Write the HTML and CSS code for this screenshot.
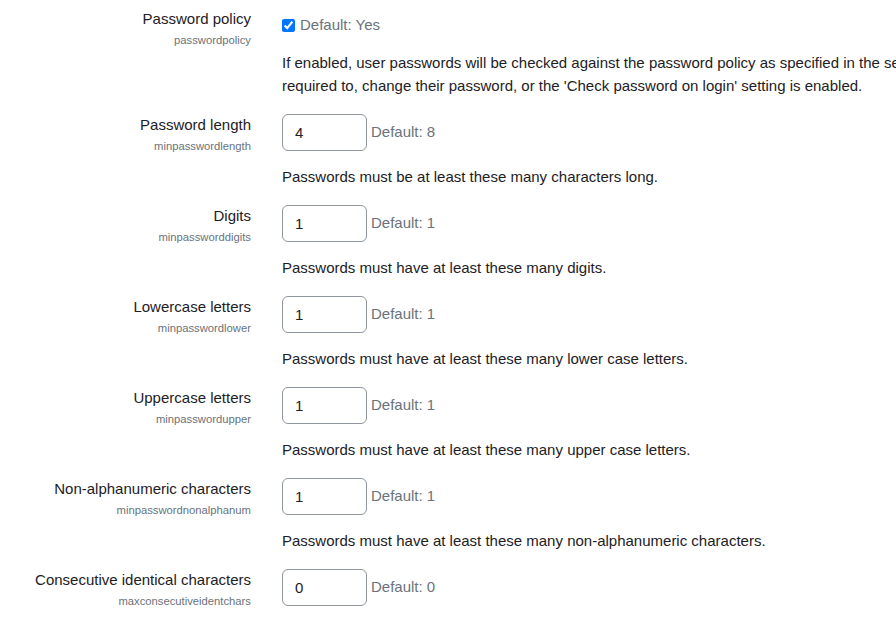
FILE: index.html
```html
<!DOCTYPE html>
<html>
<head>
<meta charset="utf-8">
<link rel="stylesheet" href="styles.css">
</head>
<body>
<div class="settings">
  <div class="form-item">
    <div class="form-label">
      <label>Password policy</label>
      <span class="shortname">passwordpolicy</span>
    </div>
    <div class="form-setting">
      <div class="check-line">
        <input type="checkbox" checked class="check">
        <span class="defaultinfo">Default: Yes</span>
      </div>
      <div class="description">
        <span class="line">If enabled, user passwords will be checked against the password policy as specified in the settings below. Enabling the password policy will not affect existing users until they decide to, or are</span>
        <span class="line">required to, change their password, or the 'Check password on login' setting is enabled.</span>
      </div>
    </div>
  </div>

  <div class="form-item">
    <div class="form-label">
      <label>Password length</label>
      <span class="shortname">minpasswordlength</span>
    </div>
    <div class="form-setting">
      <div class="input-line">
        <input type="text" class="form-control" value="4">
        <span class="defaultinfo">Default: 8</span>
      </div>
      <div class="description"><span class="line">Passwords must be at least these many characters long.</span></div>
    </div>
  </div>

  <div class="form-item">
    <div class="form-label">
      <label>Digits</label>
      <span class="shortname">minpassworddigits</span>
    </div>
    <div class="form-setting">
      <div class="input-line">
        <input type="text" class="form-control" value="1">
        <span class="defaultinfo">Default: 1</span>
      </div>
      <div class="description"><span class="line">Passwords must have at least these many digits.</span></div>
    </div>
  </div>

  <div class="form-item">
    <div class="form-label">
      <label>Lowercase letters</label>
      <span class="shortname">minpasswordlower</span>
    </div>
    <div class="form-setting">
      <div class="input-line">
        <input type="text" class="form-control" value="1">
        <span class="defaultinfo">Default: 1</span>
      </div>
      <div class="description"><span class="line">Passwords must have at least these many lower case letters.</span></div>
    </div>
  </div>

  <div class="form-item">
    <div class="form-label">
      <label>Uppercase letters</label>
      <span class="shortname">minpasswordupper</span>
    </div>
    <div class="form-setting">
      <div class="input-line">
        <input type="text" class="form-control" value="1">
        <span class="defaultinfo">Default: 1</span>
      </div>
      <div class="description"><span class="line">Passwords must have at least these many upper case letters.</span></div>
    </div>
  </div>

  <div class="form-item">
    <div class="form-label">
      <label>Non-alphanumeric characters</label>
      <span class="shortname">minpasswordnonalphanum</span>
    </div>
    <div class="form-setting">
      <div class="input-line">
        <input type="text" class="form-control" value="1">
        <span class="defaultinfo">Default: 1</span>
      </div>
      <div class="description"><span class="line">Passwords must have at least these many non-alphanumeric characters.</span></div>
    </div>
  </div>

  <div class="form-item">
    <div class="form-label">
      <label>Consecutive identical characters</label>
      <span class="shortname">maxconsecutiveidentchars</span>
    </div>
    <div class="form-setting">
      <div class="input-line">
        <input type="text" class="form-control" value="0">
        <span class="defaultinfo">Default: 0</span>
      </div>
    </div>
  </div>
</div>
</body>
</html>
```

FILE: styles.css
```css
html, body {
  margin: 0;
  padding: 0;
  background: #ffffff;
  overflow: hidden;
}
body {
  font-family: "Liberation Sans", Arial, sans-serif;
  font-size: 15px;
  line-height: 22.5px;
  color: #1d2125;
}
.settings {
  padding-top: 8px;
}
.form-item {
  display: flex;
  gap: 31px;
  margin-bottom: 17px;
}
.form-label {
  width: 251px;
  flex: none;
  display: flex;
  flex-direction: column;
  align-items: flex-end;
  text-align: right;
}
.form-label label {
  line-height: 22.5px;
}
.shortname {
  font-size: 11.25px;
  line-height: 19.5px;
  color: #6a737b;
}
.form-setting {
  flex: none;
  display: flex;
  flex-direction: column;
}
.check-line {
  display: flex;
  align-items: center;
  padding-top: 5px;
  height: 24px;
}
.check {
  margin: 1px 5px 0 0;
  width: 13px;
  height: 13px;
}
.input-line {
  display: flex;
  align-items: center;
}
.form-control {
  box-sizing: border-box;
  width: 85px;
  height: 36.5px;
  margin: 0;
  padding: 6px 12px;
  border: 1px solid #8f959e;
  border-radius: 6px;
  font-family: "Liberation Sans", Arial, sans-serif;
  font-size: 15px;
  color: #1d2125;
  background: #ffffff;
}
.defaultinfo {
  color: #6a737b;
  margin-left: 4px;
}
.check-line .defaultinfo {
  margin-left: 0;
}
.description {
  margin-top: 15px;
}
.line {
  display: block;
  white-space: nowrap;
}
```
